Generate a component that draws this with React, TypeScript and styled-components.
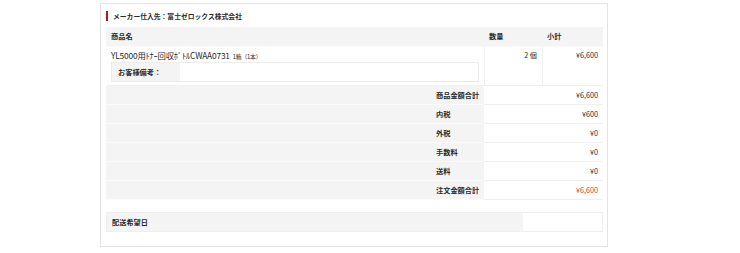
import React from 'react';
import styled, { createGlobalStyle } from 'styled-components';

const GlobalStyle = createGlobalStyle`
  body {
    margin: 0;
    background: #fff;
    font-family: "Noto Sans CJK JP", "Noto Sans", sans-serif;
    color: #2b2b2b;
  }
`;

const Page = styled.div`
  padding: 3px 0 0 100px;
`;

const Panel = styled.div`
  width: 508px;
  height: 244px;
  box-sizing: border-box;
  border: 1px solid #e4e4e4;
  padding: 7px 4px 0 5px;
`;

const Title = styled.div`
  display: flex;
  align-items: center;
  height: 10px;
  border-left: 2px solid #a8191f;
  padding-left: 5px;
  font-size: 6.8px;
  font-weight: bold;
`;

const Table = styled.div`
  margin-top: 6px;
  display: grid;
  grid-template-columns: 378px 58px 61px;
  font-size: 7.2px;
`;

const Summary = styled.div`
  display: grid;
  grid-template-columns: 325px 53px 119px;
  font-size: 7.2px;
`;

const Cell = styled.div<{ $gray?: boolean; $align?: 'left' | 'right'; $h?: number; $bold?: boolean; $red?: boolean }>`
  box-sizing: border-box;
  height: ${(p) => p.$h ?? 19}px;
  background: ${(p) => (p.$gray ? '#f4f4f4' : '#fff')};
  text-align: ${(p) => p.$align ?? 'left'};
  padding: 0 5px;
  line-height: ${(p) => (p.$h ?? 19) - 1}px;
  border-bottom: 1px solid ${(p) => (p.$gray ? '#fafafa' : '#f0f0f0')};
  font-weight: ${(p) => (p.$bold ? 'bold' : 'normal')};
  color: ${(p) => (p.$red ? '#c4472b' : '#2b2b2b')};
  white-space: nowrap;
`;

const Spacer = styled(Cell)`
  padding: 0;
`;

const LabelCell = styled(Cell)`
  padding: 0 0 0 5px;
`;

const ItemCell = styled.div<{ $left?: boolean }>`
  box-sizing: border-box;
  height: 39px;
  padding: 3px 5px 0 5px;
  border-bottom: 1px solid #f0f0f0;
  border-left: ${(p) => (p.$left ? '1px solid #f0f0f0' : 'none')};
  text-align: ${(p) => (p.$left ? 'right' : 'left')};
  line-height: 10px;
`;

const ItemName = styled.div`
  height: 10px;
  line-height: 10px;
  font-size: 8.4px;
  letter-spacing: -0.2px;
  white-space: nowrap;
  span {
    font-size: 5.8px;
    margin-left: 3px;
    vertical-align: baseline;
  }
`;

const Note = styled.div`
  display: grid;
  grid-template-columns: 68px 1fr;
  height: 20px;
  margin-top: 2px;
  border: 1px solid #ececec;
  box-sizing: border-box;
`;

const NoteLabel = styled.div`
  background: #f4f4f4;
  font-weight: bold;
  padding-left: 6px;
  line-height: 18px;
`;

const Delivery = styled.div`
  margin-top: 12px;
  display: grid;
  grid-template-columns: 416px 81px;
  height: 20px;
  border: 1px solid #efefef;
  box-sizing: border-box;
  font-size: 7.2px;
`;

const DeliveryLabel = styled.div`
  background: #f4f4f4;
  font-weight: bold;
  padding-left: 5px;
  line-height: 18px;
`;

const summary: [string, string, boolean?][] = [
  ['商品金額合計', '¥6,600'],
  ['内税', '¥600'],
  ['外税', '¥0'],
  ['手数料', '¥0'],
  ['送料', '¥0'],
  ['注文金額合計', '¥6,600', true],
];

const App: React.FC = () => {
  return (
    <Page>
      <GlobalStyle />
      <Panel>
        <Title>メーカー仕入先：富士ゼロックス株式会社</Title>
        <Table>
          <Cell $gray $h={20} $bold>商品名</Cell>
          <Cell $gray $h={20} $bold>数量</Cell>
          <Cell $gray $h={20} $bold>小計</Cell>
          <ItemCell>
            <ItemName>
              YL5000用ﾄﾅｰ回収ﾎﾞﾄﾙCWAA0731<span>1箱（1本）</span>
            </ItemName>
            <Note>
              <NoteLabel>お客様備考：</NoteLabel>
              <div />
            </Note>
          </ItemCell>
          <ItemCell $left>2 個</ItemCell>
          <ItemCell $left>¥6,600</ItemCell>
        </Table>
        <Summary>
          {summary.map(([label, value, red]) => (
            <React.Fragment key={label}>
              <Spacer $gray />
              <LabelCell $gray $bold>{label}</LabelCell>
              <Cell $align="right" $red={red}>
                {value}
              </Cell>
            </React.Fragment>
          ))}
        </Summary>
        <Delivery>
          <DeliveryLabel>配送希望日</DeliveryLabel>
          <div />
        </Delivery>
      </Panel>
    </Page>
  );
};

export default App;
